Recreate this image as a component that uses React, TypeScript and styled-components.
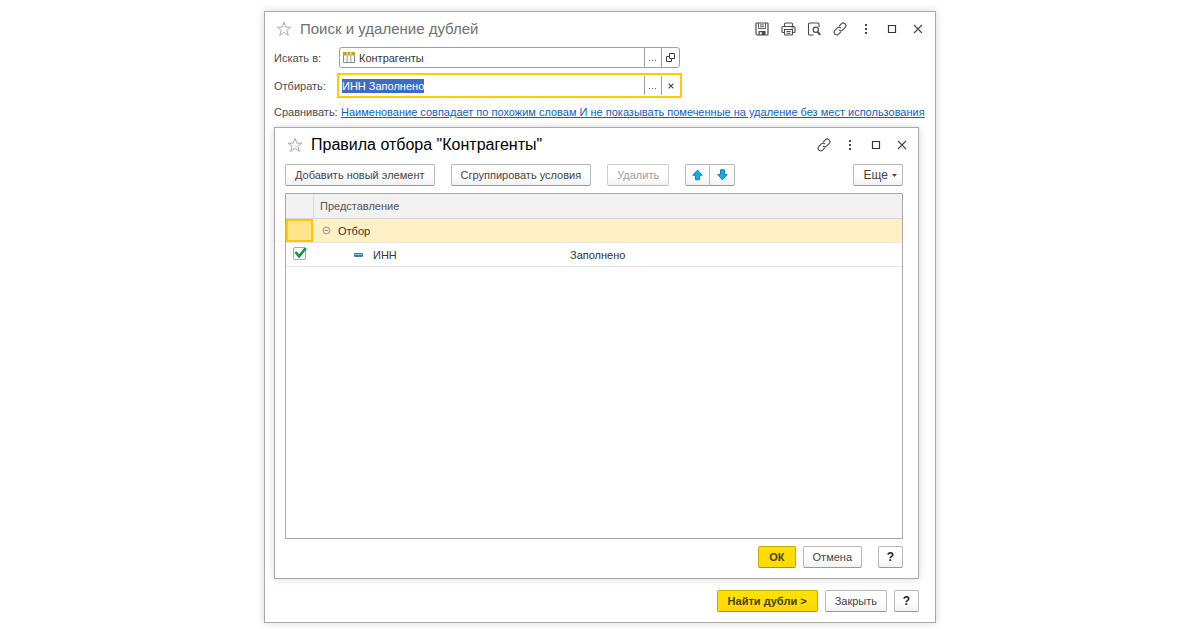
import React, { useEffect, useRef } from "react";
import styled, { createGlobalStyle, css } from "styled-components";

const GlobalStyle = createGlobalStyle`
  *, *::before, *::after { box-sizing: border-box; }
  body {
    margin: 0;
    background: #fff;
    color: #4a4a4a;
    font: 11px/18px "Liberation Sans", Arial, sans-serif;
  }
  button, input { font: inherit; color: inherit; }
`;

const Page = styled.div`
  display: flex;
  justify-content: center;
  min-height: 100vh;
  padding: 11px 0 6px;
`;

const panel = css`
  display: flex;
  flex-direction: column;
  background: #fff;
  border: 1px solid #a8a8a8;
  box-shadow: 0 0 8px rgba(0, 0, 0, 0.16);
`;

const Window = styled.main`
  ${panel}
  width: 56%;
  min-width: 660px;
  padding: 3px 16px 10px 9px;
`;

const Dialog = styled.section`
  ${panel}
  flex: 1;
  margin-top: 6px;
  padding: 3px 15px 10px 10px;
`;

const TitleBar = styled.header`
  display: flex;
  align-items: center;
  gap: 7px;
  height: 27px;
`;

const Title = styled.h1<{ $active?: boolean }>`
  flex: 1;
  margin: 0;
  font-size: ${(p) => (p.$active ? 16 : 15)}px;
  font-weight: 400;
  line-height: 20px;
  color: ${(p) => (p.$active ? "#000" : "#707070")};
`;

const Tools = styled.div`
  display: flex;
  gap: 10px;
  margin-right: -7px;
`;

const IconButton = styled.button`
  display: flex;
  align-items: center;
  justify-content: center;
  width: 16px;
  height: 16px;
  padding: 0;
  border: 0;
  background: none;
  color: #4a4a4a;
`;

const StarButton = styled(IconButton)`
  width: 19px;
  color: #a8acb0;
`;

const Form = styled.form`
  display: grid;
  grid-template-columns: 65px minmax(0, 1fr);
  row-gap: 7px;
  align-items: center;
  margin-top: 5px;
`;

const Field = styled.div<{ $focused?: boolean }>`
  display: flex;
  align-items: stretch;
  width: 100%;
  max-width: 341px;
  height: 21px;
  border: 1px solid ${(p) => (p.$focused ? "transparent" : "#a0a0a0")};
  border-radius: ${(p) => (p.$focused ? 0 : 3)}px;
  outline: ${(p) => (p.$focused ? "2px solid #ffcc00" : "none")};
`;

const FieldIcon = styled.span`
  display: flex;
  align-items: center;
  padding-left: 3px;
`;

const TextInput = styled.input<{ $afterIcon?: boolean }>`
  flex: 1;
  min-width: 0;
  padding: 0 ${(p) => (p.$afterIcon ? 4 : 2)}px;
  border: 0;
  outline: 0;
  background: none;
  color: #333;
  line-height: 14px;
  &::selection { background: #3f6bc6; color: #fff; }
`;

const FieldButton = styled.button`
  display: flex;
  align-items: center;
  justify-content: center;
  width: 17px;
  padding: 0;
  border: 0;
  border-left: 1px solid #a0a0a0;
  background: none;
  & + & { width: 18px; }
`;

const Link = styled.a`
  padding-left: 2px;
  color: #0a63c2;
  white-space: nowrap;
`;

const Bar = styled.div<{ $top: number; $end?: boolean }>`
  display: flex;
  gap: 7px;
  justify-content: ${(p) => (p.$end ? "flex-end" : "flex-start")};
  margin-top: ${(p) => p.$top}px;
`;

const Group = styled.div<{ $gap?: number; $push?: boolean }>`
  display: flex;
  gap: ${(p) => p.$gap ?? 0}px;
  margin-left: ${(p) => (p.$push ? "auto" : "0")};
`;

const Button = styled.button<{ $primary?: boolean }>`
  display: flex;
  align-items: center;
  justify-content: center;
  gap: 4px;
  height: 22px;
  padding: 0 ${(p) => (p.$primary ? 10 : 9)}px;
  border: 1px solid ${(p) => (p.$primary ? "#c9a800" : "#b8b8b8")};
  border-bottom-color: ${(p) => (p.$primary ? "#b09300" : "#989898")};
  border-radius: 2px;
  background: ${(p) =>
    p.$primary ? "linear-gradient(#ffe100, #ffd800)" : "linear-gradient(#fff 50%, #f1f1f1)"};
  color: ${(p) => (p.$primary ? "#443f20" : "#444")};
  font-weight: ${(p) => (p.$primary ? 700 : 400)};
  white-space: nowrap;
  &:disabled { color: #a0a0a0; border-color: #ccc; border-bottom-color: #bbb; }
`;

const MenuButton = styled(Button)`
  padding: 0 5px 0 10px;
  font-size: 12px;
`;

const HelpButton = styled(Button)<{ $apart?: boolean }>`
  width: 25px;
  margin-left: ${(p) => (p.$apart ? 9 : 0)}px;
  padding: 0;
  color: #222;
  font-size: 12px;
  font-weight: 700;
`;

const ArrowButton = styled(Button)`
  width: 25px;
  padding: 0;
  border-radius: 2px 0 0 2px;
  & + & { border-left: 0; border-radius: 0 2px 2px 0; }
`;

const TableFrame = styled.div`
  flex: 1;
  margin-top: 7px;
  border: 1px solid #a8a8a8;
`;

const Table = styled.table`
  width: 100%;
  table-layout: fixed;
  border-collapse: separate;
  border-spacing: 0;
`;

const CheckColumn = styled.col`
  width: 27px;
`;

const NameColumn = styled.col`
  width: 255px;
`;

const HeadCell = styled.th`
  height: 25px;
  padding: 0 6px;
  background: #f1f1f1;
  border-bottom: 1px solid #d4d4d4;
  text-align: left;
  font-weight: 400;
  color: #555;
  & + & { border-left: 1px solid #dcdcdc; }
`;

const Row = styled.tr<{ $selected?: boolean }>`
  background: ${(p) => (p.$selected ? "#fff0c6" : "#fff")};
`;

const Cell = styled.td<{ $current?: boolean; $indent?: number }>`
  height: 24px;
  padding: 0 0 0 ${(p) => p.$indent ?? 0}px;
  border-bottom: 1px solid #e6e6e6;
  color: #333;
  ${(p) =>
    p.$current &&
    css`
      background: #ffe48a;
      box-shadow: inset 0 0 0 2px #ffc800;
    `}
`;

const Entry = styled.div<{ $gap: number }>`
  display: flex;
  align-items: center;
  gap: ${(p) => p.$gap}px;
`;

const TreeToggle = styled(IconButton)`
  width: 9px;
  height: 9px;
  color: #8a8a8a;
`;

const CheckLabel = styled.label`
  position: relative;
  display: block;
  width: 16px;
  height: 16px;
  svg { position: absolute; left: 0; top: 0; visibility: hidden; pointer-events: none; }
  input:checked + svg { visibility: visible; }
`;

const CheckInput = styled.input`
  appearance: none;
  display: block;
  width: 13px;
  height: 13px;
  margin: 0;
  border: 1px solid #a8a8a8;
  border-radius: 2px;
  background: #fff;
`;

const Star = () => (
  <svg width="16" height="16" viewBox="0 0 16 16" fill="none" stroke="currentColor">
    <path d="M8 1.200l1.700 4.900 5.200.1-4.100 3.200 1.500 5L8 11.400l-4.300 3 1.500-5L1.100 6.200l5.200-.1z" />
  </svg>
);

const SaveIcon = () => (
  <svg width="14" height="14" viewBox="0 0 14 14" fill="none" stroke="currentColor">
    <path d="M1 1.500q0-.5.5-.5h11q.5 0 .5.500v11q0 .5-.5.500H2.200L1 11.800z" strokeWidth="1.200" />
    <path d="M3.500 1v5.500h7V1M5 2.900h4M5 4.700h4" strokeWidth="0.900" />
    <path d="M3.500 13V9h7v4z" fill="currentColor" stroke="none" />
    <path d="M4.800 10.200h2v2.200h-2z" fill="#fff" stroke="none" />
  </svg>
);

const PrintIcon = () => (
  <svg width="15" height="14" viewBox="0 0 15 14" fill="none" stroke="currentColor" strokeWidth="1.100">
    <path d="M3.500 4.500V2q0-1 1-1h6q1 0 1 1v2.500M3.500 10.500H2q-1 0-1-1v-4q0-1 1-1h11q1 0 1 1v4q0 1-1 1h-1.500" />
    <path d="M3.500 7.500h8v4.500q0 1-1 1h-6q-1 0-1-1zM5.500 9.500h4M5.500 11.300h4M10.500 6h2" />
  </svg>
);

const PreviewIcon = () => (
  <svg width="14" height="14" viewBox="0 0 14 14" fill="none" stroke="currentColor">
    <path d="M6.500 13H2.500q-1 0-1-1V2q0-1 1-1h8.500q1 0 1 1v3" strokeWidth="1.100" />
    <circle cx="8.800" cy="7.800" r="2.600" strokeWidth="1.200" />
    <path d="M10.500 9.800l2.700 3" strokeWidth="2" />
  </svg>
);

const LinkIcon = () => (
  <svg width="14" height="14" viewBox="0 0 14 14" fill="none" stroke="currentColor" strokeWidth="1.100">
    <path d="M6 4.300l2.300-2.400a2.600 2.600 0 0 1 3.800 3.700L9.600 8.100a2.500 2.500 0 0 1-3.700-.2" />
    <path d="M8 9.700l-2.300 2.400a2.600 2.600 0 0 1-3.800-3.700l2.500-2.500a2.500 2.500 0 0 1 3.700.2" />
  </svg>
);

const MoreIcon = () => (
  <svg width="4" height="12" viewBox="0 0 4 12" fill="currentColor">
    <path d="M1 1h2v2H1zM1 5h2v2H1zM1 9h2v2H1z" />
  </svg>
);

const MaximizeIcon = () => (
  <svg width="10" height="10" viewBox="0 0 10 10" fill="none" stroke="#333">
    <path d="M1.500 1.500h7v7h-7z" strokeWidth="1.200" />
  </svg>
);

const CloseIcon = ({ size = 10 }: { size?: number }) => (
  <svg width={size} height={size} viewBox="0 0 10 10" fill="none" stroke="#444" strokeWidth={size < 10 ? 1.8 : 1.1}>
    <path d="M1 1l8 8M9 1L1 9" />
  </svg>
);

const TableIcon = () => (
  <svg width="12" height="11" viewBox="0 0 12 11">
    <path d="M.5.500h11v10H.5z" fill="#fff" stroke="#7f8d98" />
    <path d="M0 0h12v3.500H0z" fill="#c9a21c" />
    <path d="M4.200 3.500v7M7.800 3.500v7" stroke="#7f8d98" strokeWidth="0.900" />
    <path d="M4.200 0v3.500M7.800 0v3.500" stroke="#fff3b8" strokeWidth="0.900" />
    <path d="M1 7h10" stroke="#c5cdd3" strokeWidth="0.600" />
  </svg>
);

const OpenIcon = () => (
  <svg width="9" height="9" viewBox="0 0 9 9" fill="none" stroke="#444">
    <path d="M3.500.5h5v5h-5zM3.500 3.500h-3v5h5v-3" />
  </svg>
);

const Dots = () => (
  <svg width="8" height="8" viewBox="0 0 8 8" fill="#666">
    <path d="M0 6h1v1H0zM3 6h1v1H3zM6 6h1v1H6z" />
  </svg>
);

const Arrow = ({ down }: { down?: boolean }) => (
  <svg width="11" height="12" viewBox="0 0 11 12">
    <path
      d={down ? "M3.500.8h4v4.700h2.700L5.500 10.800.8 5.500h2.700z" : "M5.500 1l4.700 5.200H7.500v4.600h-4V6.200H.8z"}
      fill="#00b4f0"
      stroke="#1673a8"
      strokeWidth="0.900"
    />
  </svg>
);

const Caret = () => (
  <svg width="5" height="3" viewBox="0 0 5 3">
    <path d="M0 0h5L2.500 3z" fill="#444" />
  </svg>
);

const CollapseIcon = () => (
  <svg width="9" height="9" viewBox="0 0 9 9" fill="none" stroke="currentColor" strokeWidth="0.900">
    <circle cx="4.500" cy="4.500" r="3.400" />
    <path d="M2.500 4.500h4" />
  </svg>
);

const ItemMark = () => (
  <svg width="9" height="4" viewBox="0 0 9 4">
    <rect width="9" height="4" rx="1" fill="#3a7fab" />
    <path d="M1 1.500h7" stroke="#8fc6e4" />
  </svg>
);

const CheckMark = () => (
  <svg width="16" height="16" viewBox="0 0 16 16" fill="none" stroke="#0b9a48" strokeWidth="2.700">
    <path d="M2.500 5l3.600 4.300L12.800 1" />
  </svg>
);

const WindowTools = () => (
  <>
    <IconButton type="button" aria-label="Ссылка"><LinkIcon /></IconButton>
    <IconButton type="button" aria-label="Меню"><MoreIcon /></IconButton>
    <IconButton type="button" aria-label="Развернуть"><MaximizeIcon /></IconButton>
    <IconButton type="button" aria-label="Закрыть окно"><CloseIcon /></IconButton>
  </>
);

export default function App() {
  const filterRef = useRef<HTMLInputElement>(null);

  useEffect(() => {
    filterRef.current?.focus();
    filterRef.current?.select();
  }, []);

  return (
    <>
      <GlobalStyle />
      <Page>
        <Window>
          <TitleBar>
            <StarButton type="button" aria-label="В избранное"><Star /></StarButton>
            <Title>Поиск и удаление дублей</Title>
            <Tools>
              <IconButton type="button" aria-label="Сохранить"><SaveIcon /></IconButton>
              <IconButton type="button" aria-label="Печать"><PrintIcon /></IconButton>
              <IconButton type="button" aria-label="Просмотр"><PreviewIcon /></IconButton>
              <WindowTools />
            </Tools>
          </TitleBar>

          <Form onSubmit={(e) => e.preventDefault()}>
            <label htmlFor="source">Искать в:</label>
            <Field>
              <FieldIcon><TableIcon /></FieldIcon>
              <TextInput id="source" $afterIcon defaultValue="Контрагенты" />
              <FieldButton type="button" aria-label="Выбрать"><Dots /></FieldButton>
              <FieldButton type="button" aria-label="Открыть"><OpenIcon /></FieldButton>
            </Field>
            <label htmlFor="filter">Отбирать:</label>
            <Field $focused>
              <TextInput id="filter" ref={filterRef} defaultValue="ИНН Заполнено" />
              <FieldButton type="button" aria-label="Выбрать отбор"><Dots /></FieldButton>
              <FieldButton type="button" aria-label="Очистить"><CloseIcon size={6} /></FieldButton>
            </Field>
            <span>Сравнивать:</span>
            <Link href="#compare">
              Наименование совпадает по похожим словам И не показывать помеченные на удаление без мест использования
            </Link>
          </Form>

          <Dialog>
            <TitleBar>
              <StarButton type="button" aria-label="В избранное"><Star /></StarButton>
              <Title as="h2" $active>Правила отбора "Контрагенты"</Title>
              <Tools>
                <WindowTools />
              </Tools>
            </TitleBar>
            <Bar $top={6}>
              <Group $gap={16}>
                <Button type="button">Добавить новый элемент</Button>
                <Button type="button">Сгруппировать условия</Button>
                <Button type="button" disabled>Удалить</Button>
                <Group>
                  <ArrowButton type="button" aria-label="Вверх"><Arrow /></ArrowButton>
                  <ArrowButton type="button" aria-label="Вниз"><Arrow down /></ArrowButton>
                </Group>
              </Group>
              <Group $push>
                <MenuButton type="button">Еще <Caret /></MenuButton>
              </Group>
            </Bar>
            <TableFrame>
              <Table>
                <colgroup>
                  <CheckColumn />
                  <NameColumn />
                  <col />
                </colgroup>
                <thead>
                  <tr>
                    <HeadCell aria-label="Использование" />
                    <HeadCell colSpan={2}>Представление</HeadCell>
                  </tr>
                </thead>
                <tbody>
                  <Row $selected>
                    <Cell $current />
                    <Cell $indent={9} colSpan={2}>
                      <Entry $gap={7}>
                        <TreeToggle type="button" aria-label="Свернуть"><CollapseIcon /></TreeToggle>
                        Отбор
                      </Entry>
                    </Cell>
                  </Row>
                  <Row>
                    <Cell $indent={7}>
                      <CheckLabel>
                        <CheckInput type="checkbox" defaultChecked aria-label="ИНН" />
                        <CheckMark />
                      </CheckLabel>
                    </Cell>
                    <Cell $indent={41}>
                      <Entry $gap={10}><ItemMark /> ИНН</Entry>
                    </Cell>
                    <Cell $indent={2}>Заполнено</Cell>
                  </Row>
                </tbody>
              </Table>
            </TableFrame>
            <Bar $top={7} $end>
              <Button type="button" $primary>ОК</Button>
              <Button type="button">Отмена</Button>
              <HelpButton type="button" $apart aria-label="Справка">?</HelpButton>
            </Bar>
          </Dialog>

          <Bar $top={11} $end>
            <Button type="button" $primary>Найти дубли &gt;</Button>
            <Button type="button">Закрыть</Button>
            <HelpButton type="button" aria-label="Справка">?</HelpButton>
          </Bar>
        </Window>
      </Page>
    </>
  );
}
